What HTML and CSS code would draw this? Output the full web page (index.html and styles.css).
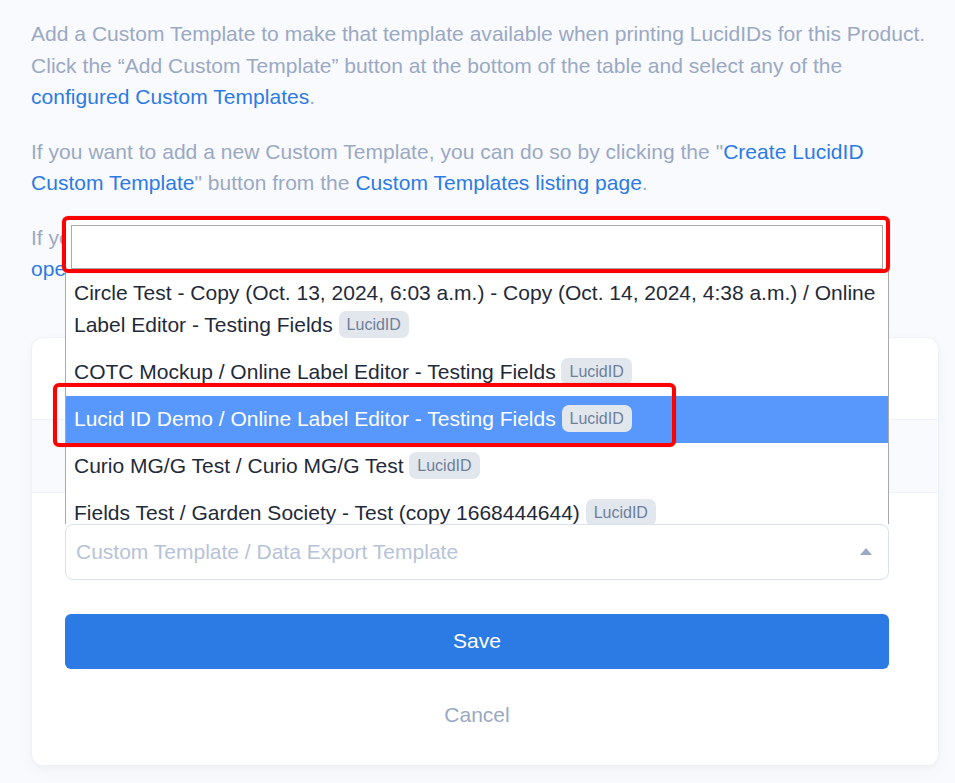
FILE: index.html
```html
<!DOCTYPE html>
<html lang="en">
<head>
<meta charset="utf-8">
<title>Custom Templates</title>
<link rel="stylesheet" href="styles.css">
</head>
<body>
<main class="page">
  <p class="lead">Add a Custom Template to make that template available when printing LucidIDs for this Product. Click the “Add Custom Template” button at the bottom of the table and select any of the <a class="link" href="#">configured Custom Templates</a>.</p>
  <p class="lead">If you want to add a new Custom Template, you can do so by clicking the "<a class="link" href="#">Create LucidID Custom Template</a>" button from the <a class="link" href="#">Custom Templates listing page</a>.</p>
  <p class="lead">If you want to change a Custom Template, you can<br><a class="link" href="#">open the Custom Template editor</a>.</p>

  <section class="card">
    <div class="card-head"></div>
    <div class="card-row"></div>
    <div class="card-body">
      <div class="select">
        <div class="dropdown">
          <div class="search"><input class="search-input" type="text" aria-label="Search"></div>
          <ul class="options">
            <li class="option">Circle Test - Copy (Oct. 13, 2024, 6:03 a.m.) - Copy (Oct. 14, 2024, 4:38 a.m.) / Online Label Editor - Testing Fields <span class="badge">LucidID</span></li>
            <li class="option">COTC Mockup / Online Label Editor - Testing Fields <span class="badge">LucidID</span></li>
            <li class="option is-active">Lucid ID Demo / Online Label Editor - Testing Fields <span class="badge">LucidID</span></li>
            <li class="option">Curio MG/G Test / Curio MG/G Test <span class="badge">LucidID</span></li>
            <li class="option">Fields Test / Garden Society - Test (copy 1668444644) <span class="badge">LucidID</span></li>
            <li class="option">Garden Society / Online Label Editor - Testing Fields <span class="badge">LucidID</span></li>
          </ul>
        </div>
        <span class="placeholder">Custom Template / Data Export Template</span>
        <span class="arrow"></span>
      </div>
      <button class="save" type="button">Save</button>
      <a class="cancel" href="#">Cancel</a>
    </div>
  </section>
</main>
<div class="mark mark-search"></div>
<div class="mark mark-option"></div>
</body>
</html>
```

FILE: styles.css
```css
* { box-sizing: border-box; }

html, body { margin: 0; }

body {
  background: #f9fafd;
  font-family: "Liberation Sans", Arial, sans-serif;
  font-size: 21px;
  color: #9aa9c4;
}

.page {
  width: 955px;
  padding: 18px 16px 18px 31px;
}

.lead {
  margin: 0 0 23px;
  line-height: 31.5px;
  letter-spacing: 0.03px;
}

.link {
  color: #2c7be5;
  text-decoration: none;
}

.card {
  margin-top: 52px;
  background: #fff;
  border: 1px solid #edf2f9;
  border-radius: 12px;
  box-shadow: 0 6px 14px rgba(65, 69, 88, 0.04), 0 2px 5px rgba(0, 0, 0, 0.02);
}

.card-head {
  height: 82px;
  border-bottom: 1px solid #edf2f9;
  border-radius: 12px 12px 0 0;
}

.card-row {
  height: 73px;
  background: #f9fafd;
  border-bottom: 1px solid #edf2f9;
}

.card-body {
  padding: 31px 49px 34px 33px;
}

.select {
  position: relative;
  display: flex;
  align-items: center;
  height: 56px;
  padding: 0 16px 0 10px;
  background: #fff;
  border: 1px solid #d8e2ef;
  border-radius: 8px;
}

.placeholder {
  flex: 1;
  color: #b6c3d8;
}

.arrow {
  width: 0;
  height: 0;
  border-left: 6px solid transparent;
  border-right: 6px solid transparent;
  border-bottom: 7px solid #9aa9c4;
}

.dropdown {
  position: absolute;
  left: -1px;
  right: -1px;
  bottom: calc(100% + 1px);
  background: #fff;
  border: 1px solid #aaa;
  border-bottom: 0;
  z-index: 5;
}

.search {
  padding: 6px 5px 1px;
}

.search-input {
  display: block;
  width: 100%;
  height: 44px;
  padding: 4px;
  font: inherit;
  border: 1px solid #aaa;
  background: #fff;
  outline: none;
}

.options {
  list-style: none;
  margin: 0;
  padding: 0;
  height: 254px;
  overflow: hidden;
}

.option {
  padding: 7.5px 8px;
  line-height: 32px;
  color: #1f2a3a;
}

.option.is-active {
  background: #5897fb;
  color: #fff;
}

.badge {
  display: inline-block;
  vertical-align: middle;
  margin-top: -3px;
  padding: 0 8px;
  height: 27px;
  line-height: 27px;
  font-size: 16px;
  color: #6e7f99;
  background: #e2e7ee;
  border-radius: 7px;
}

.save {
  display: block;
  width: 100%;
  height: 55px;
  margin-top: 34px;
  border: 0;
  border-radius: 6px;
  background: #2c7be5;
  color: #fff;
  font: inherit;
  cursor: pointer;
}

.cancel {
  display: block;
  margin-top: 30px;
  line-height: 32px;
  text-align: center;
  color: #9aa9c4;
  text-decoration: none;
}

.mark {
  position: absolute;
  z-index: 10;
  border: 4px solid #f00;
  border-radius: 6px;
  box-shadow: 0 0 1px rgba(80, 0, 0, 0.5);
  pointer-events: none;
}

.mark-search {
  left: 62px;
  top: 216px;
  width: 828px;
  height: 57px;
}

.mark-option {
  left: 53px;
  top: 383px;
  width: 623px;
  height: 64px;
}
```
